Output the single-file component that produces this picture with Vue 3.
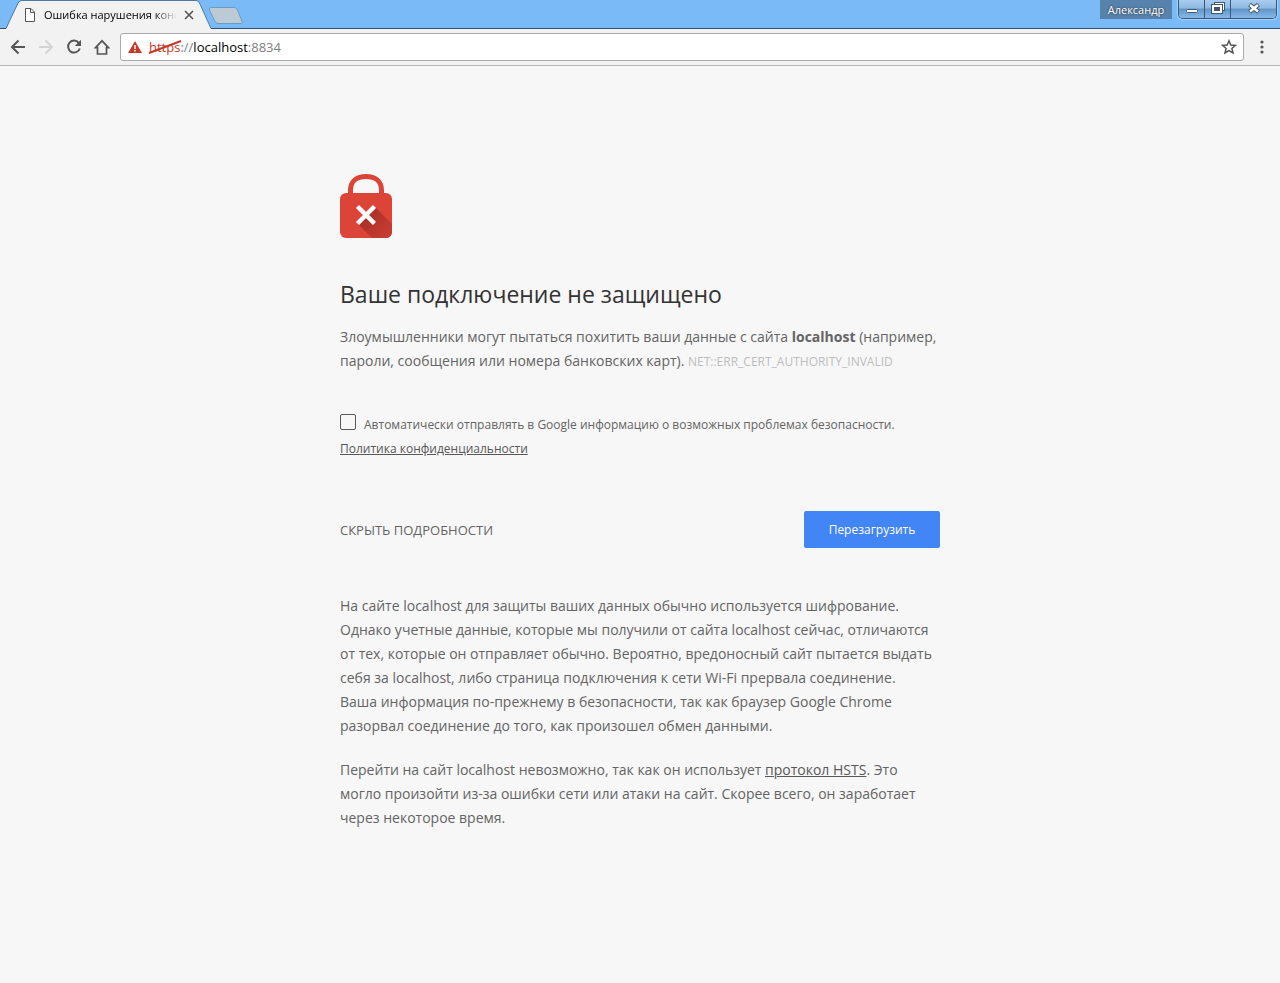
<script setup>
import {ref} from "vue";

const tabTitle = 'Ошибка нарушения конфиденциальности';
const user = 'Александр';
const url = ref('https://localhost:8834');
const sendReports = ref(false);
const detailsOpen = ref(true);

const toggleDetails = () => {
  detailsOpen.value = !detailsOpen.value;
}
</script>

<template>
  <div class="browser">
    <header class="titlebar">
      <div class="tab">
        <svg class="tabShape" viewBox="0 0 206 29" preserveAspectRatio="none" aria-hidden="true">
          <path d="M0 28.500L12 3Q13.500 .5 16 .5H190Q192.500 .5 193.500 3L205 28.500V29H0Z" fill="#f2f2f2"/>
          <path d="M0 28.500L12 3Q13.500 .5 16 .5H190Q192.500 .5 193.500 3L205 28.500" fill="none" stroke="#4a7ba8"/>
        </svg>
        <svg class="fileIcon" viewBox="0 0 12 14" aria-hidden="true">
          <path d="M1.500 .5H7L10.500 4V13.500H1.500ZM6.500 .5V4.500H10.500" fill="#fff" stroke="#555"/>
        </svg>
        <span class="tabTitle">{{tabTitle}}</span>
        <button class="tabClose" aria-label="Закрыть вкладку">
          <svg viewBox="0 0 10 10"><path d="M1 1L9 9M9 1L1 9" stroke="#555" stroke-width="1.600"/></svg>
        </button>
      </div>
      <button class="newTab" aria-label="Новая вкладка">
        <svg viewBox="0 0 36 18">
          <path d="M4 .5H26Q28 .5 29 2L34 14Q35 16.500 33 16.500H10Q8 16.500 7 14.500L1.500 3Q.5 .5 4 .5Z" fill="#bccad6" stroke="#6c9cc4"/>
        </svg>
      </button>
      <div class="spacer"></div>
      <button class="user">{{user}}</button>
      <div class="winButtons">
        <button class="winBtn" aria-label="Свернуть">
          <svg viewBox="0 0 14 14"><rect x="1.500" y="8.500" width="11" height="3" rx="1" fill="#fff" stroke="#46566a"/></svg>
        </button>
        <button class="winBtn" aria-label="Развернуть">
          <svg viewBox="0 0 14 14" fill="none">
            <rect x="4.500" y="2.500" width="8" height="6" stroke="#46566a" stroke-width="3"/>
            <rect x="4.500" y="2.500" width="8" height="6" stroke="#fff"/>
            <rect x="2" y="5" width="8" height="6" fill="#6295c8" stroke="#46566a" stroke-width="4"/>
            <rect x="2" y="5" width="8" height="6" stroke="#fff" stroke-width="2"/>
            <rect x="4" y="7" width="4" height="2" fill="#46566a"/>
          </svg>
        </button>
        <button class="winBtn winClose" aria-label="Закрыть">
          <svg viewBox="0 0 14 14" fill="none">
            <path d="M2.500 3.500L11.500 11M11.500 3.500L2.500 11" stroke="#46566a" stroke-width="4.500"/>
            <path d="M3 4L11 10.500M11 4L3 10.500" stroke="#fff" stroke-width="2.500"/>
          </svg>
        </button>
      </div>
    </header>

    <nav class="toolbar">
      <div class="tools">
        <button class="tool" aria-label="Назад">
          <svg viewBox="0 0 16 16"><path d="M15 8H2M8.500 1.500L2 8L8.500 14.500" fill="none" stroke="#555" stroke-width="2"/></svg>
        </button>
        <button class="tool" aria-label="Вперед" disabled>
          <svg viewBox="0 0 16 16"><path d="M1 8H14M7.500 1.500L14 8L7.500 14.500" fill="none" stroke="#d4d4d4" stroke-width="2"/></svg>
        </button>
        <button class="tool" aria-label="Обновить">
          <svg viewBox="0 0 16 16">
            <path d="M12.800 3.800A6 6 0 1 0 13.800 9.500" fill="none" stroke="#555" stroke-width="2"/>
            <path d="M15 .8V7H8.800Z" fill="#555"/>
          </svg>
        </button>
        <button class="tool" aria-label="Главная">
          <svg viewBox="0 0 16 16"><path d="M1.500 8.700H3.500V15H12.500V8.700H14.500L8 1.800Z" fill="none" stroke="#555" stroke-width="1.700"/></svg>
        </button>
      </div>
      <div class="omnibox">
        <svg class="warnIcon" viewBox="0 0 14 12" aria-hidden="true">
          <path d="M7 0L14 12H0Z" fill="#c5392a"/>
          <path d="M7 4V8M7 9V10.500" stroke="#fff" stroke-width="1.500"/>
        </svg>
        <div class="url" :title="url">
          <span class="scheme">https<svg viewBox="0 0 34 14" aria-hidden="true"><path d="M1 13L33 1" stroke="#c5392a" stroke-width="2"/></svg></span><span>://</span><span class="host">localhost</span><span>:8834</span>
        </div>
        <button class="star" aria-label="Добавить в закладки">
          <svg viewBox="0 0 16 16"><path d="M8 1.800L9.800 6L14.400 6.400L10.900 9.400L12 13.900L8 11.500L4 13.900L5.100 9.400L1.600 6.400L6.200 6Z" fill="none" stroke="#555" stroke-width="1.500"/></svg>
        </button>
      </div>
      <button class="menu" aria-label="Меню">
        <svg viewBox="0 0 4 14" fill="#555"><circle cx="2" cy="2" r="1.600"/><circle cx="2" cy="7" r="1.600"/><circle cx="2" cy="12" r="1.600"/></svg>
      </button>
    </nav>

    <main class="content">
      <svg class="lock" viewBox="0 0 52 64" aria-hidden="true">
        <defs>
          <linearGradient id="lockShade" x1="26" y1="40" x2="46" y2="60" gradientUnits="userSpaceOnUse">
            <stop offset="0" stop-color="#a82f26"/>
            <stop offset="1" stop-color="#c63c31"/>
          </linearGradient>
          <clipPath id="lockBody"><rect y="19" width="52" height="45" rx="6"/></clipPath>
        </defs>
        <path d="M10.500 22V16C10.500 7 17 2.500 26 2.500S41.500 7 41.500 16V22" fill="none" stroke="#db4437" stroke-width="5"/>
        <rect y="19" width="52" height="45" rx="6" fill="#db4437"/>
        <path d="M35 33L54 52V66H34L18 50L26 42Z" fill="url(#lockShade)" clip-path="url(#lockBody)"/>
        <path d="M17.500 32.500L34.500 49.500M34.500 32.500L17.500 49.500" stroke="#fff" stroke-width="4.500"/>
      </svg>

      <h1>Ваше подключение не защищено</h1>
      <p class="text">Злоумышленники могут пытаться похитить ваши данные с сайта <strong>localhost</strong> (например, пароли, сообщения или номера банковских карт). <span class="errorCode">NET::ERR_CERT_AUTHORITY_INVALID</span></p>

      <div class="report">
        <input id="sendReports" v-model="sendReports" type="checkbox">
        <label for="sendReports">Автоматически отправлять в Google информацию о возможных проблемах безопасности.</label>
      </div>
      <div class="privacy">
        <a href="#">Политика конфиденциальности</a>
      </div>

      <div class="buttons">
        <button class="detailsBtn" @click="toggleDetails">{{detailsOpen ? 'СКРЫТЬ ПОДРОБНОСТИ' : 'ПОДРОБНЕЕ'}}</button>
        <button class="reloadBtn">Перезагрузить</button>
      </div>

      <div v-if="detailsOpen" class="details">
        <p class="text">На сайте localhost для защиты ваших данных обычно используется шифрование. Однако учетные данные, которые мы получили от сайта localhost сейчас, отличаются от тех, которые он отправляет обычно. Вероятно, вредоносный сайт пытается выдать себя за localhost, либо страница подключения к сети Wi-Fi прервала соединение. Ваша&nbsp;информация по-прежнему в безопасности, так как браузер Google Chrome разорвал соединение до того, как произошел обмен данными.</p>
        <p class="text">Перейти на сайт localhost невозможно, так как он использует <a href="#">протокол HSTS</a>. Это могло произойти из-за ошибки сети или атаки на сайт. Скорее всего, он заработает через некоторое время.</p>
      </div>
    </main>
  </div>
</template>

<style>
body{
  background-color: #f7f7f7;
}
</style>

<style scoped>
.browser{
  font-family: "Open Sans", "Noto Sans", sans-serif;
  color: #646464;
}
button{
  padding: 0;
  border: none;
  background: none;
  font-family: inherit;
}
svg{
  display: block;
}
.titlebar{
  display: flex;
  align-items: flex-start;
  height: 28px;
  padding: 0 3px 0 6px;
  background-color: #7abbf7;
  border-bottom: 1px solid #33526f;
}
.tab{
  position: relative;
  display: flex;
  align-items: center;
  width: 206px;
  height: 29px;
}
.tabShape{
  position: absolute;
  inset: 0;
  width: 100%;
  height: 100%;
}
.fileIcon{
  position: relative;
  width: 12px;
  height: 14px;
  margin: 0 8px 0 18px;
}
.tabTitle{
  position: relative;
  width: 133px;
  overflow: hidden;
  white-space: nowrap;
  font-size: 11px;
  color: #000;
  mask-image: linear-gradient(to right, #000 110px, transparent 133px);
}
.tabClose{
  position: relative;
  margin-left: 7px;
}
.tabClose svg{
  width: 10px;
  height: 10px;
}
.newTab{
  margin: 7px 0 0 -4px;
}
.newTab svg{
  width: 36px;
  height: 18px;
}
.spacer{
  flex: 1;
}
.user{
  width: 72px;
  height: 19px;
  margin-right: 6px;
  background-color: #5682ab;
  font-size: 11px;
  color: #fff;
  text-shadow: 0 0 2px #222;
}
.winButtons{
  display: flex;
  height: 18px;
  border: 1px solid #3a5878;
  border-top: none;
  border-radius: 0 0 5px 5px;
  overflow: hidden;
  box-shadow: 0 0 1px 1px #a9d3fa;
}
.winBtn{
  display: flex;
  justify-content: center;
  width: 26px;
  border-right: 1px solid #3a5878;
  background: linear-gradient(#a8cdf0 0, #8fb9e2 45%, #6295c8 50%, #86b9ea 100%);
}
.winBtn svg{
  width: 14px;
  height: 14px;
  margin-top: 1px;
}
.winClose{
  width: 45px;
  border-right: none;
}
.toolbar{
  display: flex;
  align-items: center;
  height: 36px;
  padding: 0 16px 0 10px;
  background-color: #f2f2f2;
  border-bottom: 1px solid #b6b6b6;
}
.tools{
  display: flex;
  gap: 12px;
  margin-right: 10px;
}
.tool svg{
  width: 16px;
  height: 16px;
}
.omnibox{
  flex: 1;
  display: flex;
  align-items: center;
  height: 26px;
  margin-right: 16px;
  padding: 0 6px 0 7px;
  border: 1px solid #a9a9a9;
  border-radius: 3px;
  background-color: #fff;
}
.warnIcon{
  width: 14px;
  height: 12px;
  margin-right: 7px;
}
.url{
  flex: 1;
  font-size: 13px;
  color: #808080;
}
.scheme{
  position: relative;
  color: #c5392a;
}
.scheme svg{
  position: absolute;
  left: -1px;
  top: 2px;
  width: 34px;
  height: 14px;
}
.host{
  color: #000;
}
.star svg{
  width: 16px;
  height: 16px;
}
.menu svg{
  width: 4px;
  height: 14px;
}
.content{
  max-width: 600px;
  margin: 0 auto;
  padding: 108px 24px 40px;
}
.lock{
  width: 52px;
  height: 64px;
}
h1{
  margin: 40px 0 15px;
  font-size: 23px;
  font-weight: 400;
  line-height: 32px;
  color: #333;
}
.text{
  margin: 0;
  font-size: 14px;
  line-height: 24px;
}
.errorCode{
  font-size: 12px;
  color: #bdbdbd;
}
.report{
  display: flex;
  align-items: center;
  gap: 8px;
  margin-top: 39px;
  font-size: 12px;
  line-height: 24px;
}
.report input{
  appearance: none;
  width: 16px;
  height: 16px;
  margin: 0 0 6px;
  border: 1px solid #5a5a5a;
  border-radius: 2px;
}
.report input:checked{
  background-color: #4285f4;
}
a{
  color: #585858;
}
.privacy{
  font-size: 12px;
  line-height: 24px;
}
.buttons{
  display: flex;
  justify-content: space-between;
  align-items: center;
  margin-top: 50px;
}
.detailsBtn{
  font-size: 13px;
  color: #646464;
  cursor: pointer;
}
.reloadBtn{
  min-width: 136px;
  height: 37px;
  padding: 0 24px;
  border-radius: 2px;
  background-color: #4285f4;
  font-size: 12px;
  color: #fff;
  cursor: pointer;
}
.details{
  margin-top: 46px;
}
.details .text{
  margin-bottom: 20px;
}
</style>
